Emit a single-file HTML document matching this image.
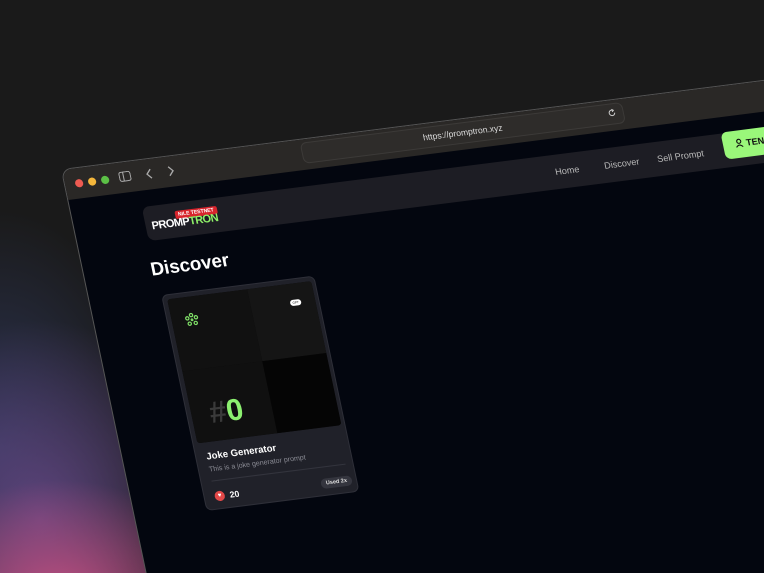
<!DOCTYPE html>
<html><head><meta charset="utf-8"><style>
html,body{margin:0;padding:0;width:764px;height:573px;overflow:hidden;}
#clip{position:absolute;left:0;top:0;width:764px;height:573px;overflow:hidden;font-family:"Liberation Sans",sans-serif;
background:
radial-gradient(ellipse 160px 120px at 60px 600px, rgba(200,80,130,0.95), rgba(200,80,130,0) 100%),
radial-gradient(ellipse 170px 200px at 40px 520px, rgba(100,70,130,0.9), rgba(80,70,130,0) 100%),
radial-gradient(ellipse 150px 240px at 0px 450px, rgba(50,60,100,0.8), rgba(50,60,100,0) 100%),
#1a1a1a;}
#win{position:absolute;left:0;top:0;width:760px;height:520px;transform-origin:0 0;
transform:matrix(1,-0.127,0.21,1,62,170);}
.abs{position:absolute;}
#frame{left:0;top:0;width:760px;height:520px;background:#03060f;border-radius:9px 0 0 0;box-shadow:0 0 0 1px #555;}
#title{left:0;top:0;width:760px;height:30px;background:#2a2826;border-radius:9px 0 0 0;}
.dot{top:11px;width:8px;height:8px;border-radius:50%;}
#url{left:237px;top:3px;width:320px;height:19px;border-radius:6px;background:#2e2c2a;border:1px solid #3c3a38;color:#ddd;font-size:8.5px;text-align:center;line-height:19px;}
#bar{left:70px;top:46px;width:690px;height:34px;background:#1d1d24;border-radius:7px 0 0 7px;}
.nav{color:#bbb;font-size:9px;top:58px;}
#btn{left:649px;top:45px;width:111px;height:27px;background:#9af77a;border-radius:6px 0 0 6px;color:#111;font-size:9px;font-weight:bold;line-height:27px;padding-left:12px;box-sizing:border-box;}
#card{left:71px;top:134px;width:153px;height:216px;background:#202129;border-radius:6px;border:1px solid #2e2f38;box-sizing:border-box;overflow:hidden;}
</style></head><body>
<div id="clip">
<div id="win">
<div id="frame" class="abs"></div>
<div id="title" class="abs"></div>
<div class="abs dot" style="left:10px;background:#ee5b52"></div>
<div class="abs dot" style="left:23px;background:#f4b63b"></div>
<div class="abs dot" style="left:36px;background:#5cc046"></div>
<svg class="abs" style="left:54px;top:9px" width="12" height="11" viewBox="0 0 12 11"><rect x="0.5" y="0.5" width="11" height="9" rx="2" fill="none" stroke="#aaa"/><line x1="4.5" y1="0.5" x2="4.5" y2="9.5" stroke="#aaa"/></svg>
<svg class="abs" style="left:80px;top:9px" width="8" height="11"><path d="M6 1 L2 5.5 L6 10" fill="none" stroke="#aaa" stroke-width="1.3"/></svg>
<svg class="abs" style="left:102px;top:9px" width="8" height="11"><path d="M2 1 L6 5.5 L2 10" fill="none" stroke="#aaa" stroke-width="1.3"/></svg>
<div id="url" class="abs">https://promptron.xyz</div>
<svg class="abs" style="left:543px;top:8px" width="9" height="9"><path d="M7 4.5 A2.7 2.7 0 1 1 5.5 2" fill="none" stroke="#ccc" stroke-width="1"/><path d="M4.5 0.8 L6.2 2 L4.8 3.4" fill="none" stroke="#ccc" stroke-width="1"/></svg>
<div id="bar" class="abs"></div>
<div class="abs" style="left:101px;top:54px;background:#d8242c;color:#fff;font-size:5px;font-weight:bold;padding:1px 3px;border-radius:2px">NILE TESTNET</div>
<div class="abs" style="left:76px;top:60px;font-size:11px;font-weight:900;letter-spacing:-0.6px;color:#fff">PROMP<span style="color:#8ef068">TRON</span></div>
<div class="abs nav" style="left:480px">Home</div>
<div class="abs nav" style="left:529px">Discover</div>
<div class="abs nav" style="left:582px">Sell Prompt</div>
<div id="btn" class="abs"><svg width="8" height="9" style="vertical-align:-1px;margin-right:3px"><circle cx="4" cy="2.8" r="2" fill="none" stroke="#111" stroke-width="1.1"/><path d="M0.7 8.5 Q4 4.5 7.3 8.5" fill="none" stroke="#111" stroke-width="1.1"/></svg>TENx</div>
<div class="abs" style="left:66px;top:97px;color:#fff;font-size:18.5px;font-weight:bold">Discover</div>
<div id="card" class="abs">
 <div class="abs" style="left:4px;top:4px;width:144px;height:144px;overflow:hidden;border-radius:3px;background:#0a0a0a">
  <div class="abs" style="left:0;top:0;width:80px;height:72px;background:#111111"></div>
  <div class="abs" style="left:80px;top:0;width:64px;height:72px;background:#151515"></div>
  <div class="abs" style="left:0;top:72px;width:80px;height:72px;background:#101010"></div>
  <div class="abs" style="left:80px;top:72px;width:64px;height:72px;background:#050505"></div>
  <svg class="abs" style="left:13px;top:16px" width="14" height="14" viewBox="0 0 14 14"><g fill="none" stroke="#7fe067" stroke-width="1.2"><circle cx="7" cy="2.3" r="1.6"/><circle cx="11.3" cy="5" r="1.6"/><circle cx="10" cy="10.5" r="1.6"/><circle cx="4" cy="10.5" r="1.6"/><circle cx="2.7" cy="5" r="1.6"/><circle cx="7" cy="7" r="0.8"/></g></svg>
  <div class="abs" style="left:119px;top:16px;width:11px;height:6px;background:#fff;border-radius:3px;font-size:3px;color:#000;text-align:center;line-height:6px">GPT</div>
  <div class="abs" style="left:18px;top:100px;font-size:30px;font-weight:bold;color:#3a3a3a">#<span style="color:#8cf070">0</span></div>
 </div>
 <div class="abs" style="left:10px;top:157px;color:#fff;font-size:9.5px;font-weight:bold">Joke Generator</div>
 <div class="abs" style="left:10px;top:172px;color:#8a8b94;font-size:7px">This is a joke generator prompt</div>
 <div class="abs" style="left:10px;top:186px;width:134px;height:1px;background:#33343d"></div>
 <div class="abs" style="left:116px;top:198px;height:10px;padding:0 5px;background:#34353e;border-radius:5px;color:#ddd;font-size:5.5px;font-weight:bold;line-height:10px">Used 2x</div>
 <div class="abs" style="left:10px;top:197px;width:10px;height:10px;border-radius:50%;background:#e24848;color:#fff;font-size:6px;text-align:center;line-height:10px">♥</div>
 <div class="abs" style="left:25px;top:197px;color:#fff;font-size:8.5px;font-weight:bold">20</div>
</div>
</div>
</div>
</body></html>
